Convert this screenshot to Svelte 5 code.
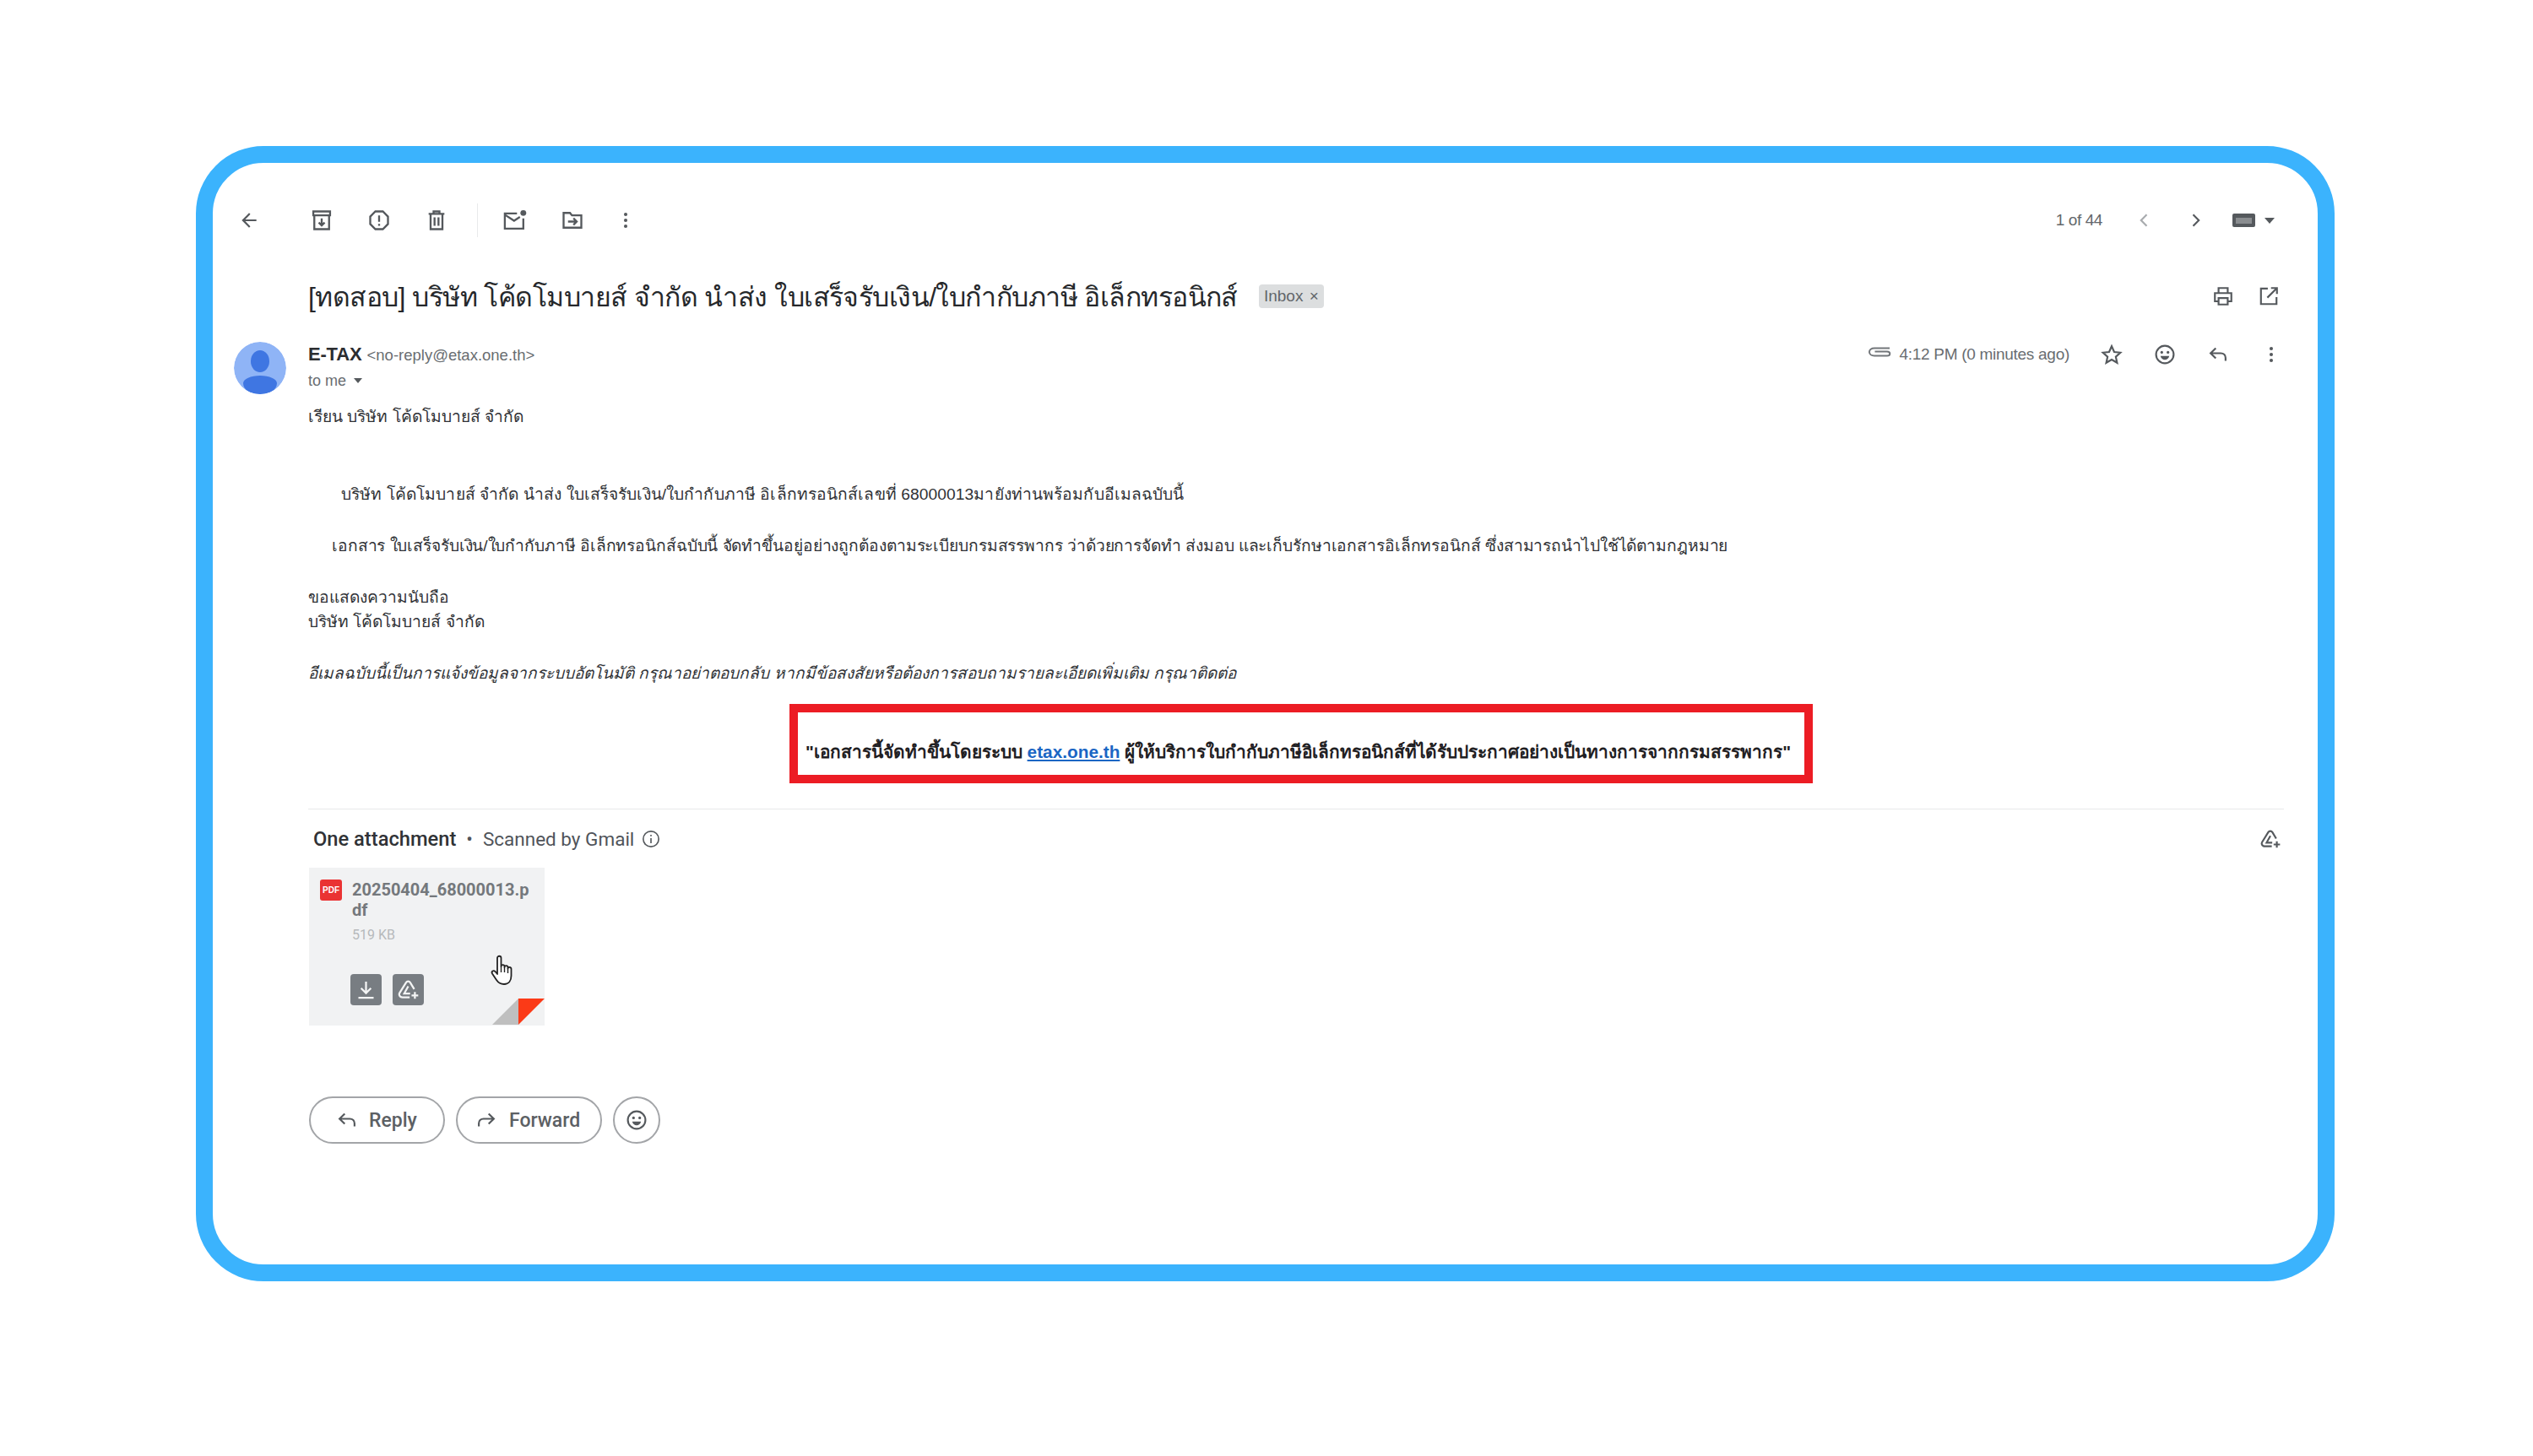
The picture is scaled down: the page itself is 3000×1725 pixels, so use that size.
<script>
  const lines = {
    dear: 'เรียน บริษัท โค้ดโมบายส์ จำกัด',
    intro: 'บริษัท โค้ดโมบายส์ จำกัด นำส่ง ใบเสร็จรับเงิน/ใบกำกับภาษี อิเล็กทรอนิกส์เลขที่ 68000013มายังท่านพร้อมกับอีเมลฉบับนี้',
    doc: 'เอกสาร ใบเสร็จรับเงิน/ใบกำกับภาษี อิเล็กทรอนิกส์ฉบับนี้ จัดทำขึ้นอยู่อย่างถูกต้องตามระเบียบกรมสรรพากร ว่าด้วยการจัดทำ ส่งมอบ และเก็บรักษาเอกสารอิเล็กทรอนิกส์ ซึ่งสามารถนำไปใช้ได้ตามกฎหมาย',
    regards: 'ขอแสดงความนับถือ',
    company: 'บริษัท โค้ดโมบายส์ จำกัด',
    notice: 'อีเมลฉบับนี้เป็นการแจ้งข้อมูลจากระบบอัตโนมัติ กรุณาอย่าตอบกลับ หากมีข้อสงสัยหรือต้องการสอบถามรายละเอียดเพิ่มเติม กรุณาติดต่อ'
  };
</script>

{#snippet dots()}
  <svg viewBox="0 0 24 24" class="ic"><circle cx="12" cy="5.5" r="1.9" /><circle cx="12" cy="12" r="1.9" /><circle cx="12" cy="18.5" r="1.9" /></svg>
{/snippet}

{#snippet smile()}
  <svg viewBox="0 0 24 24" class="ic line">
    <circle cx="12" cy="12" r="9.6" />
    <circle class="solid" cx="8.6" cy="9.6" r="1.5" />
    <circle class="solid" cx="15.4" cy="9.6" r="1.5" />
    <path class="solid" d="M7.2 13.6h9.6c-.6 2.6-2.5 4.2-4.8 4.2s-4.2-1.6-4.8-4.2z" />
  </svg>
{/snippet}

{#snippet replyArrow()}
  <svg viewBox="0 0 24 24" class="ic line"><path d="M9.5 5 3.8 10.6l5.7 5.6M4.2 10.6H15c3.2 0 5.2 2.2 5.2 5.2v3.2" /></svg>
{/snippet}

<div class="page">
  <main class="frame">
    <div class="toolbar">
      <button class="tb back" aria-label="Back">
        <svg viewBox="0 0 24 24" class="ic"><path d="M20 11H7.83l5.59-5.59L12 4l-8 8 8 8 1.41-1.41L7.83 13H20v-2z" /></svg>
      </button>
      <button class="tb" aria-label="Archive">
        <svg viewBox="0 0 24 24" class="ic line big"><path d="M3.500 3h17v4h-17zM4.500 7h15v14h-15zM12 10v7M9 14.200l3 3 3-3" /></svg>
      </button>
      <button class="tb" aria-label="Report spam">
        <svg viewBox="0 0 24 24" class="ic line big"><path d="M8.200 3h7.600L21 8.200v7.600L15.800 21H8.200L3 15.800V8.200z" /><path d="M12 7v6.400M12 15.600v2" /></svg>
      </button>
      <button class="tb" aria-label="Delete">
        <svg viewBox="0 0 24 24" class="ic line big"><path d="M4 5.500h16M9 5.500V3h6v2.500M6 5.500h12V21H6zM10 9v8.500M14 9v8.500" /></svg>
      </button>
      <span class="tb-sep"></span>
      <button class="tb" aria-label="Mark as unread">
        <svg viewBox="0 0 26 24" class="ic mail line">
          <path d="M15 5H2.500v15.500h19V10" /><path d="m2.800 6.500 9.200 6 6-4" />
          <circle class="solid" cx="21.500" cy="4.500" r="3" />
        </svg>
      </button>
      <button class="tb" aria-label="Move to">
        <svg viewBox="0 0 24 24" class="ic line big"><path d="M3 19.500V4.500h6.500l2 2.500H21v12.500zM7.500 13.300h8.500M13 10l3.300 3.300L13 16.600" /></svg>
      </button>
      <button class="tb more" aria-label="More">{@render dots()}</button>

      <div class="pager">
        <span class="count">1 of 44</span>
        <svg viewBox="0 0 24 24" class="ic chev pale"><path d="M15 4 7 12l8 8" /></svg>
        <svg viewBox="0 0 24 24" class="ic chev next"><path d="m9 4 8 8-8 8" /></svg>
        <span class="kbd" aria-hidden="true"><i></i></span>
        <span class="caret"></span>
      </div>
    </div>

    <div class="subject">
      <h1>[ทดสอบ] บริษัท โค้ดโมบายส์ จำกัด นำส่ง ใบเสร็จรับเงิน/ใบกำกับภาษี อิเล็กทรอนิกส์</h1>
      <span class="chip">Inbox <b>×</b></span>
      <div class="subject-tools">
        <svg viewBox="0 0 24 24" class="ic line"><path d="M7 8V3h10v5M6.500 17.500H3V8.500h18v9h-3.500M7 14h10v7H7z" /></svg>
        <svg viewBox="0 0 24 24" class="ic line"><path d="M11 3.500H3.500v17h17V13M14.500 3H21v6.500M21 3 10.500 13.500" /></svg>
      </div>
    </div>

    <div class="sender">
      <svg class="avatar" viewBox="0 0 62 62">
        <circle cx="31" cy="31" r="31" fill="#8fb4f6" />
        <ellipse cx="31" cy="23" rx="11" ry="13" fill="#3f76e2" />
        <path d="M31 40c11 0 20 4 20 9 0 8-9 13-20 13s-20-5-20-13c0-5 9-9 20-9z" fill="#3f76e2" />
      </svg>
      <div class="who">
        <div class="from"><strong>E-TAX</strong> <span>&lt;no-reply@etax.one.th&gt;</span></div>
        <div class="to">to me <span class="caret small"></span></div>
      </div>
      <div class="meta">
        <svg viewBox="0 0 28 18" class="clip"><path d="M26 4.500H8C4.500 4.500 2 6.300 2 9s2.500 4.500 6 4.500h15c2 0 3.300-1 3.300-2.500S25 8.500 23 8.500H8.500" /></svg>
        <span class="time">4:12 PM (0 minutes ago)</span>
        <svg viewBox="0 0 24 24" class="ic line"><path d="m12 3 2.800 6.200 6.700.7-5 4.500 1.400 6.600L12 17.600 6.100 21l1.400-6.600-5-4.500 6.700-.7z" /></svg>
        {@render smile()}
        {@render replyArrow()}
        {@render dots()}
      </div>
    </div>

    <article class="body">
      <p class="dear">{lines.dear}</p>
      <p class="intro">{lines.intro}</p>
      <p class="doc">{lines.doc}</p>
      <p class="regards">{lines.regards}<br />{lines.company}</p>
      <p class="notice">{lines.notice}</p>
    </article>

    <div class="redbox">
      <p>"เอกสารนี้จัดทำขึ้นโดยระบบ <a href="#top">etax.one.th</a> ผู้ให้บริการใบกำกับภาษีอิเล็กทรอนิกส์ที่ได้รับประกาศอย่างเป็นทางการจากกรมสรรพากร"</p>
    </div>

    <div class="rule"></div>

    <div class="att-head">
      <strong>One attachment</strong>
      <span class="dot">•</span>
      <span>Scanned by Gmail</span>
      <svg viewBox="0 0 24 24" class="info"><circle cx="12" cy="12" r="10" /><path d="M12 11v6.500M12 6.500v2" /></svg>
      <svg viewBox="0 0 24 24" class="ic line drive">
        <path d="M13.500 20H6c-1.500 0-2.800-.9-3.300-2-.4-.8-.3-1.700.2-2.500l6.800-11c1-1.600 3.400-1.600 4.400 0l4.200 7" />
        <path d="M12 8.500 7.800 16H14" /><path d="M19 14.500v7M15.500 18h7" />
      </svg>
    </div>

    <div class="card">
      <div class="file">
        <span class="pdf">PDF</span>
        <div class="fname">
          <div>20250404_68000013.p<br />df</div>
          <small>519 KB</small>
        </div>
      </div>
      <div class="card-btns">
        <span class="sq">
          <svg viewBox="0 0 24 24"><path d="M12 3.500v12M6.800 10.500l5.200 5.200 5.200-5.200M4 20.500h16" /></svg>
        </span>
        <span class="sq">
          <svg viewBox="0 0 24 24">
            <path d="M13.500 20H6c-1.500 0-2.800-.9-3.300-2-.4-.8-.3-1.700.2-2.500l6.800-11c1-1.600 3.400-1.600 4.400 0l4.200 7" />
            <path d="M12 8.500 7.800 16H14" /><path d="M19 14.500v7M15.500 18h7" />
          </svg>
        </span>
      </div>
      <svg class="fold" viewBox="0 0 62 32">
        <path d="M0 31 31 0v31z" fill="#bfbfbf" />
        <path d="M31 0h31L31 31z" fill="#fb3a17" />
      </svg>
      <svg class="hand" viewBox="0 0 30 40">
        <path d="M9 24V5c0-3 4.500-3 4.500 0v10c0-2.500 4-2.500 4 0v1c0-2.500 4-2.500 4 0v1.500c0-2.500 4-2 4 .5v8c0 6-3 10-8.500 10-5 0-7-2-9-5l-5-7.500c-1.500-2.500 1.500-4.500 3.500-2.500z" fill="#fff" stroke="#222" stroke-width="1.800" stroke-linejoin="round" />
        <path d="M13.500 15v7M17.500 16v6M21.500 17.500V23" fill="none" stroke="#222" stroke-width="1.400" />
      </svg>
    </div>

    <div class="actions">
      <button class="pill reply">{@render replyArrow()}<span>Reply</span></button>
      <button class="pill forward">
        <svg viewBox="0 0 24 24" class="ic line"><path d="M14.500 5l5.700 5.600-5.700 5.600M19.800 10.600H9c-3.200 0-5.200 2.200-5.200 5.200v3.200" /></svg>
        <span>Forward</span>
      </button>
      <button class="pill emoji" aria-label="Add emoji">{@render smile()}</button>
    </div>
  </main>
</div>

<style>
  :global(body) {
    margin: 0;
    background: #fff;
  }
  .page {
    width: 3000px;
    height: 1725px;
    padding: 173px 235px 0 232px;
    box-sizing: border-box;
    font-family: "Liberation Sans", "Noto Sans", "DejaVu Sans", sans-serif;
    color: #2b2d30;
  }
  .frame {
    height: 1345px;
    box-sizing: border-box;
    border: 20px solid #3bb3fd;
    border-radius: 80px;
    display: flex;
    flex-direction: column;
    padding-top: 38px;
    background: #fff;
  }
  button {
    border: 0;
    background: none;
    padding: 0;
    font: inherit;
    color: inherit;
  }
  .ic {
    width: 26px;
    height: 26px;
    fill: #55595d;
    flex: none;
  }
  .ic.big {
    width: 28px;
    height: 28px;
  }
  .ic.mail {
    width: 30px;
    height: 28px;
  }
  .ic.line {
    fill: none;
    stroke: #55595d;
    stroke-width: 2;
  }
  .ic.line .solid {
    fill: #55595d;
    stroke: none;
  }

  .toolbar {
    height: 60px;
    display: flex;
    align-items: center;
    padding-right: 51px;
  }
  .tb {
    width: 68px;
    height: 60px;
    display: flex;
    align-items: center;
    justify-content: center;
  }
  .tb.back {
    width: 86px;
    margin-right: 9px;
  }
  .tb.more {
    width: 58px;
  }
  .tb-sep {
    width: 1px;
    height: 40px;
    background: #e9eaeb;
    margin: 0 10px 0 14px;
  }
  .pager {
    margin-left: auto;
    display: flex;
    align-items: center;
    color: #63676b;
  }
  .count {
    font-size: 19px;
    letter-spacing: -0.4px;
    margin-right: 40px;
  }
  .chev {
    width: 20px;
    height: 20px;
    fill: none;
    stroke: #55595d;
    stroke-width: 2.600;
    margin-right: 40px;
  }
  .chev.next {
    margin-right: 34px;
  }
  .chev.pale {
    stroke: #a8abae;
  }
  .kbd {
    width: 27px;
    height: 16px;
    background: #55595d;
    border-radius: 2px;
    display: flex;
    align-items: center;
    justify-content: center;
  }
  .kbd i {
    width: 19px;
    height: 7px;
    background: #8a8d90;
  }
  .caret {
    width: 0;
    height: 0;
    border-left: 6px solid transparent;
    border-right: 6px solid transparent;
    border-top: 7px solid #55595d;
    margin-left: 11px;
  }

  .subject {
    display: flex;
    align-items: center;
    height: 60px;
    margin-top: 30px;
    padding-left: 113px;
    padding-right: 45px;
  }
  h1 {
    margin: 0;
    font-size: 32px;
    letter-spacing: -0.55px;
    font-weight: 400;
    color: #26282b;
    white-space: nowrap;
  }
  .chip {
    margin-left: 25px;
    background: #dcdedf;
    border-radius: 4px;
    color: #62666a;
    font-size: 19px;
    padding: 3px 6px;
  }
  .chip b {
    font-weight: 400;
    margin-left: 2px;
  }
  .subject-tools {
    margin-left: auto;
    display: flex;
    gap: 28px;
  }

  .sender {
    display: flex;
    margin-top: 24px;
    padding-right: 42px;
    height: 74px;
  }
  .avatar {
    width: 62px;
    height: 62px;
    margin: 0 26px 0 25px;
    flex: none;
    border-radius: 50%;
  }
  .from {
    font-size: 22px;
    line-height: 30px;
  }
  .from strong {
    letter-spacing: -0.2px;
  }
  .from span {
    font-size: 18.500px;
    color: #696d71;
  }
  .to {
    font-size: 18px;
    line-height: 30px;
    color: #696d71;
    display: flex;
    align-items: center;
  }
  .caret.small {
    border-width: 6px 5px 0;
    margin-left: 9px;
  }
  .meta {
    margin-left: auto;
    display: flex;
    align-items: center;
    height: 30px;
    gap: 37px;
  }
  .clip {
    width: 28px;
    height: 20px;
    fill: none;
    stroke: #72767a;
    stroke-width: 2;
    margin-right: -28px;
    margin-top: -6px;
  }
  .time {
    font-size: 19px;
    letter-spacing: -0.28px;
    color: #696d71;
  }

  .body {
    padding-left: 113px;
    font-size: 19.200px;
    line-height: 29px;
    color: #303236;
  }
  .body p {
    margin: 0;
    white-space: nowrap;
  }
  .body .intro {
    margin-top: 63px;
    padding-left: 39px;
    letter-spacing: 0.1px;
  }
  .body .doc {
    margin-top: 32px;
    padding-left: 28px;
    letter-spacing: -0.11px;
  }
  .body .regards {
    margin-top: 32px;
  }
  .body .notice {
    margin-top: 32px;
    font-style: italic;
    font-size: 19px;
  }

  .redbox {
    margin: 22px 0 0 683px;
    width: 1212px;
    height: 94px;
    box-sizing: border-box;
    border: 10px solid #ec1c24;
    display: flex;
    align-items: center;
    justify-content: center;
    padding: 18px 7px 0 0;
  }
  .redbox p {
    margin: 0;
    font-size: 20.800px;
    font-weight: 700;
    color: #1f2023;
    white-space: nowrap;
  }
  .redbox a {
    color: #1a66c4;
  }

  .rule {
    height: 1px;
    background: #e8e9ea;
    margin: 30px 40px 0 113px;
  }

  .att-head {
    display: flex;
    align-items: center;
    height: 30px;
    margin-top: 20px;
    padding: 0 43px 0 119px;
    font-size: 22.500px;
    color: #50545a;
    font-family: Roboto, "Liberation Sans", sans-serif;
  }
  .att-head strong {
    color: #303236;
    font-weight: 500;
    font-size: 23.700px;
  }
  .dot {
    margin: 0 12px;
  }
  .info {
    width: 22px;
    height: 22px;
    margin-left: 9px;
    fill: none;
    stroke: #55595d;
    stroke-width: 1.800;
  }
  .drive {
    margin-left: auto;
  }

  .card {
    position: relative;
    width: 279px;
    height: 187px;
    margin: 19px 0 0 114px;
    background: #f1f2f3;
    box-sizing: border-box;
    padding: 14px 13px 0;
    display: flex;
    flex-direction: column;
  }
  .file {
    display: flex;
    gap: 12px;
  }
  .pdf {
    width: 26px;
    height: 25px;
    border-radius: 3px;
    background: #ea3333;
    color: #fff;
    font-size: 10px;
    font-weight: 700;
    text-align: center;
    line-height: 25px;
    flex: none;
  }
  .fname {
    font-size: 20px;
    line-height: 24px;
    font-weight: 700;
    color: #74787c;
    font-family: Roboto, "Liberation Sans", sans-serif;
  }
  .fname small {
    display: block;
    font-size: 16px;
    font-weight: 400;
    color: #b6b9bb;
    margin-top: 6px;
    line-height: 24px;
  }
  .card-btns {
    display: flex;
    gap: 13px;
    margin: 34px 0 0 36px;
  }
  .sq {
    width: 37px;
    height: 37px;
    border-radius: 4px;
    background: #787d82;
    display: flex;
    align-items: center;
    justify-content: center;
  }
  .sq svg {
    width: 27px;
    height: 27px;
    fill: none;
    stroke: #f4f5f5;
    stroke-width: 2;
  }
  .fold {
    position: absolute;
    right: 0;
    bottom: 0;
    width: 62px;
    height: 32px;
  }
  .hand {
    position: absolute;
    left: 214px;
    top: 102px;
    width: 30px;
    height: 40px;
  }

  .actions {
    display: flex;
    gap: 13px;
    margin: 84px 0 0 114px;
  }
  .pill {
    height: 56px;
    border: 2px solid #a3a5a8;
    border-radius: 28px;
    box-sizing: border-box;
    display: flex;
    align-items: center;
    font-size: 23px;
    font-family: Roboto, "Liberation Sans", sans-serif;
    font-weight: 500;
    color: #5c6064;
  }
  .reply {
    width: 161px;
    padding-left: 30px;
    gap: 13px;
  }
  .forward {
    width: 173px;
    padding-left: 21px;
    gap: 14px;
  }
  .emoji {
    width: 56px;
    justify-content: center;
  }
</style>
